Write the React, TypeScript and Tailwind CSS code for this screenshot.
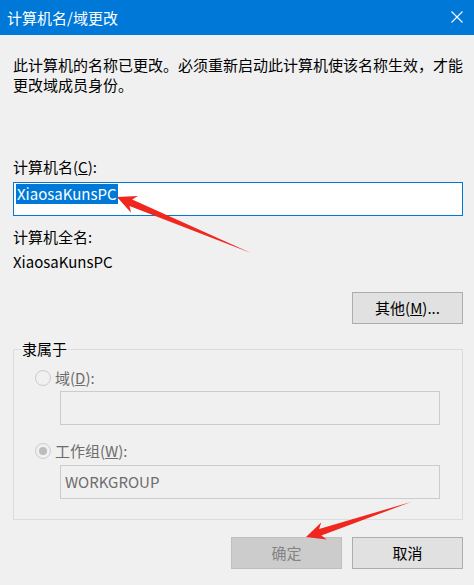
import React from "react";

type Pt = [number, number];

// tapered red callout arrow, tip -> tail
function arrowPoints(tip: Pt, tail: Pt, head = 19, wing = 9, shaft = 3.5) {
  const dx = tail[0] - tip[0];
  const dy = tail[1] - tip[1];
  const len = Math.hypot(dx, dy);
  const ux = dx / len;
  const uy = dy / len;
  const nx = -uy;
  const ny = ux;
  const at = (d: number, w: number): Pt => [tip[0] + ux * d + nx * w, tip[1] + uy * d + ny * w];
  const pts: Pt[] = [
    tip,
    at(head, wing),
    at(head - 4, shaft),
    tail,
    at(head - 4, -shaft),
    at(head, -wing),
  ];
  return pts.map((p) => p.join(",")).join(" ");
}

function Radio({ checked }: { checked?: boolean }) {
  return (
    <span className="flex h-[16px] w-[16px] items-center justify-center rounded-full border border-[#cccccc] bg-[#f0f0f0]">
      {checked && <span className="h-[8px] w-[8px] rounded-full bg-[#bcbcbc]" />}
    </span>
  );
}

export default function App() {
  const font = { fontFamily: '"Noto Sans CJK SC", "Noto Sans", sans-serif' };

  return (
    <div className="relative h-[585px] w-[474px] overflow-hidden bg-[#f0f0f0] text-[15px] leading-[20px] text-black" style={font}>
      <div className="flex h-[35px] items-center justify-between bg-[#0078d7] pl-[7px] pr-[11px] text-white">
        <span>计算机名/域更改</span>
        <svg width="12" height="12" viewBox="0 0 12 12" className="mt-[-1px]">
          <path d="M0.5 0.5 L11.5 11.5 M11.5 0.5 L0.5 11.5" stroke="white" strokeWidth="1.1" />
        </svg>
      </div>

      <div className="flex flex-col pl-[13px] pr-[11px]">
        <p className="mt-[20px]">
          此计算机的名称已更改。必须重新启动此计算机使该名称生效，才能
          <br />
          更改域成员身份。
        </p>

        <div className="mt-[62px]">
          计算机名(<span className="underline">C</span>):
        </div>
        <div className="mt-[5px] flex h-[34px] items-start border border-[#0078d7] bg-white pl-[2px] pt-[1px]">
          <span className="bg-[#0078d7] px-[1px] text-white">XiaosaKunsPC</span>
        </div>

        <div className="mt-[11px]">计算机全名:</div>
        <div className="mt-[5px]">XiaosaKunsPC</div>

        <div className="mt-[20px] flex justify-end">
          <button className="h-[32px] w-[111px] border border-[#adadad] bg-[#e1e1e1]">
            其他(<span className="underline">M</span>)...
          </button>
        </div>

        <fieldset className="mt-[15px] h-[181px] border border-[#dcdcdc] pl-[21px] pr-[22px]">
          <legend className="ml-[-14px] px-[1px]">隶属于</legend>
          <div className="mt-[9px] flex items-center gap-[4px] text-[#6d6d6d]">
            <Radio />
            <span>
              域(<span className="underline">D</span>):
            </span>
          </div>
          <div className="ml-[25px] mt-[3px] h-[34px] border border-[#cccccc] bg-[#f0f0f0]" />
          <div className="mt-[16px] flex items-center gap-[4px] text-[#6d6d6d]">
            <Radio checked />
            <span>
              工作组(<span className="underline">W</span>):
            </span>
          </div>
          <div className="ml-[25px] mt-[4px] flex h-[34px] items-center border border-[#cccccc] bg-[#f0f0f0] pl-[4px] text-[#6d6d6d]">
            WORKGROUP
          </div>
        </fieldset>

        <div className="mt-[17px] flex justify-end gap-[10px]">
          <button className="h-[32px] w-[111px] border border-[#bfbfbf] bg-[#cccccc] text-[#838383]">确定</button>
          <button className="h-[32px] w-[111px] border border-[#adadad] bg-[#e1e1e1]">取消</button>
        </div>
      </div>

      <svg className="pointer-events-none absolute left-0 top-0" width="474" height="585">
        <polygon points={arrowPoints([117, 197], [251, 253])} fill="#f0271f" />
        <polygon points={arrowPoints([306, 537], [411, 502])} fill="#f0271f" />
      </svg>
    </div>
  );
}
